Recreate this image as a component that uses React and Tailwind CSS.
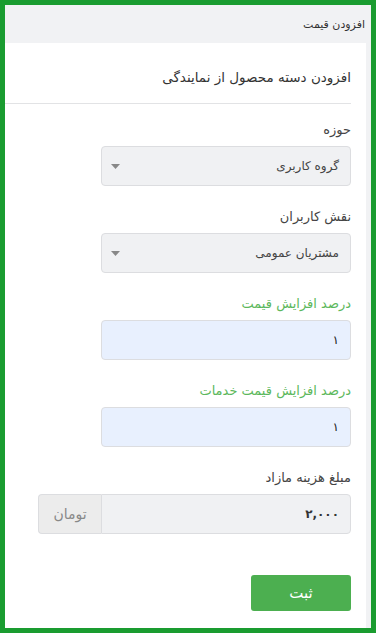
const FONT = { fontFamily: '"DejaVu Sans", "Noto Sans", sans-serif' }

function Caret() {
  return (
    <svg width="9" height="5" viewBox="0 0 9 5" className="shrink-0">
      <path d="M0 0 L9 0 L4.5 5 Z" fill="#888" />
    </svg>
  )
}

function SelectBox({ value }) {
  return (
    <div className="h-10 w-full flex items-center justify-between pr-[11px] pl-[9px] bg-[#f0f1f3] border border-[#dcdde0] rounded-[4px]">
      <span className="text-[12px] text-[#444]">{value}</span>
      <Caret />
    </div>
  )
}

function Field({ label, green, children }) {
  return (
    <div className="flex flex-col gap-[6px]">
      <label className={`text-[13px] leading-[20px] ${green ? 'text-[#5cb85c]' : 'text-[#444]'}`}>{label}</label>
      {children}
    </div>
  )
}

export default function App() {
  return (
    <div dir="rtl" style={FONT} className="w-[376px] h-[633px] border-[5px] border-[#1a9c30] bg-[#f1f2f4] flex flex-col overflow-hidden">
      <div className="h-[38px] flex items-center px-[6px] shrink-0">
        <span className="text-[11px] text-[#333] pt-[2px]">افزودن قیمت</span>
      </div>
      <div className="flex-1 bg-white mr-[5px] flex flex-col">
        <div className="pr-[15px] pt-[24px] pb-[16px]">
          <h2 className="text-[13.5px] leading-[20px] text-[#333] font-medium">افزودن دسته محصول از نمایندگی</h2>
        </div>
        <div className="h-px bg-[#e2e3e5] mr-[15px]" />
        <div className="pr-[15px] pl-[96px] pt-[16px] flex flex-col gap-[21px]">
          <Field label="حوزه">
            <SelectBox value="گروه کاربری" />
          </Field>
          <Field label="نقش کاربران">
            <SelectBox value="مشتریان عمومی" />
          </Field>
          <Field label="درصد افزایش قیمت" green>
            <div className="h-10 w-full flex items-center px-[11px] bg-[#e8f0fe] border border-[#dcdde0] rounded-[4px] text-[12px] text-[#222]">۱</div>
          </Field>
          <Field label="درصد افزایش قیمت خدمات" green>
            <div className="h-10 w-full flex items-center px-[11px] bg-[#e8f0fe] border border-[#dcdde0] rounded-[4px] text-[12px] text-[#222]">۱</div>
          </Field>
        </div>
        <div className="pr-[15px] pl-[33px] pt-[21px]">
          <Field label="مبلغ هزینه مازاد">
            <div className="flex h-10">
              <div className="flex-1 flex items-center px-[11px] bg-[#f0f1f3] border border-[#dcdde0] rounded-r-[4px] text-[12px] font-semibold text-[#333]">۲,۰۰۰</div>
              <div className="w-[63px] flex items-center justify-center bg-[#ececec] border border-r-0 border-[#dcdde0] rounded-l-[4px] text-[14px] text-[#888]">تومان</div>
            </div>
          </Field>
        </div>
        <div className="pr-[15px] pt-[41px]">
          <button className="w-[100px] h-9 bg-[#4caf50] text-white text-[15px] rounded-[3px]">ثبت</button>
        </div>
      </div>
    </div>
  )
}
